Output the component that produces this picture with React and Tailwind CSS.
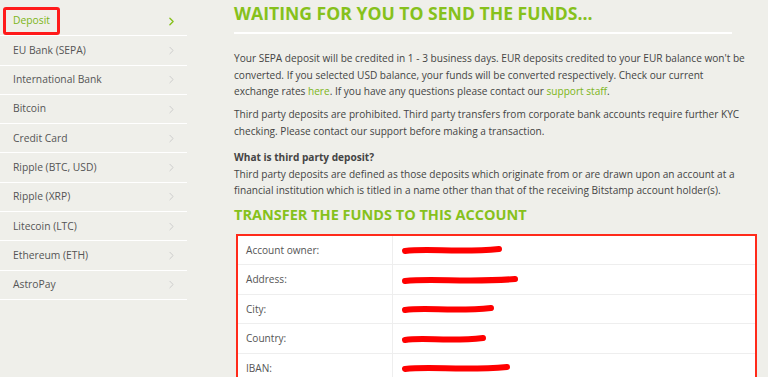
import React from "react";
import { ChevronRight } from "lucide-react";

const menu = [
  "Deposit",
  "EU Bank (SEPA)",
  "International Bank",
  "Bitcoin",
  "Credit Card",
  "Ripple (BTC, USD)",
  "Ripple (XRP)",
  "Litecoin (LTC)",
  "Ethereum (ETH)",
  "AstroPay",
];

// redacted values, widths of the red scribble
const rows = [
  { label: "Account owner:", w: 94 },
  { label: "Address:", w: 110 },
  { label: "City:", w: 86 },
  { label: "Country:", w: 78 },
  { label: "IBAN:", w: 102 },
];

const Scribble = ({ w }) => (
  <svg width={w + 8} height="12" viewBox={`0 0 ${w + 8} 12`}>
    <path
      d={`M4 7 C ${w * 0.3} 4, ${w * 0.6} 9, ${w + 4} 5`}
      stroke="#ff0000"
      strokeWidth="6"
      strokeLinecap="round"
      fill="none"
    />
  </svg>
);

export default function App() {
  return (
    <div
      className="flex w-[768px] h-[377px] overflow-hidden bg-[#efefea] text-[#555]"
      style={{ fontFamily: "'Open Sans', sans-serif" }}
    >
      {/* Sidebar */}
      <div className="w-[187px] shrink-0 pt-[7px]">
        {menu.map((item, i) => (
          <div
            key={item}
            className="flex items-center justify-between h-[29.3px] border-b border-white pl-[13px] pr-[9px] text-[10.3px]"
          >
            {i === 0 ? (
              <span className="-ml-[10px] rounded-[3px] border-[3px] border-[#ff1a1a] px-[7px] py-[3px] text-[#7cb518]">
                {item}
              </span>
            ) : (
              <span>{item}</span>
            )}
            <ChevronRight
              className={i === 0 ? "w-[13px] h-[13px] text-[#86c11c]" : "w-[13px] h-[13px] text-[#c4c4c4]"}
              strokeWidth={i === 0 ? 2.5 : 1.5}
            />
          </div>
        ))}
      </div>

      {/* Main */}
      <div className="ml-[47px] w-[526px] shrink-0 text-[10.1px] leading-[16.6px] text-[#444]">
        <h1 className="text-[17.6px] font-bold leading-[26px] text-[#86c11c]">
          WAITING FOR YOU TO SEND THE FUNDS...
        </h1>
        <div className="mt-[6px] h-[2px] w-[498px] bg-white" />
        <p className="mt-[16px]">
          Your SEPA deposit will be credited in 1 - 3 business days. EUR deposits credited to your EUR balance won't be
          converted. If you selected USD balance, your funds will be converted respectively. Check our current
          <br />
          exchange rates <span className="text-[#7cb518]">here</span>. If you have any questions please contact our{" "}
          <span className="text-[#7cb518]">support staff</span>.
        </p>
        <p className="mt-[6.5px]">
          Third party deposits are prohibited. Third party transfers from corporate bank accounts require further KYC
          checking. Please contact our support before making a transaction.
        </p>
        <p className="mt-[9.5px] font-bold">What is third party deposit?</p>
        <p>
          Third party deposits are defined as those deposits which originate from or are drawn upon an account at a
          financial institution which is titled in a name other than that of the receiving Bitstamp account holder(s).
        </p>
        <h2 className="mt-[5px] text-[14.5px] font-bold leading-[22px] text-[#86c11c]">
          TRANSFER THE FUNDS TO THIS ACCOUNT
        </h2>
        <div className="mt-[8px] ml-[2px] w-[521px] border-2 border-[#ff2a1a] bg-white">
          {rows.map((r) => (
            <div key={r.label} className="flex h-[29.5px] border-b border-[#eeeeee]">
              <div className="flex w-[155px] items-center border-r border-[#eeeeee] pl-[8px] text-[#555]">
                {r.label}
              </div>
              <div className="flex items-center pl-[8px]">
                <Scribble w={r.w} />
              </div>
            </div>
          ))}
        </div>
      </div>
    </div>
  );
}
